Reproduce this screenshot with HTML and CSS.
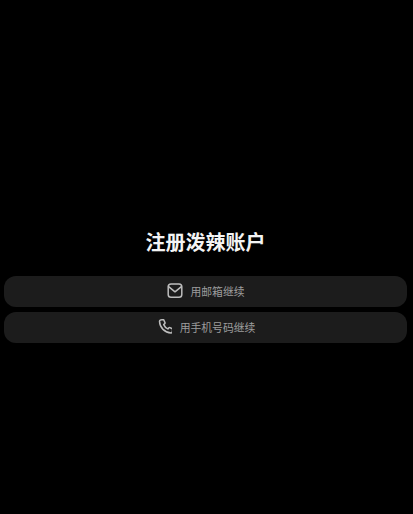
FILE: index.html
```html
<!DOCTYPE html>
<html lang="zh">
<head>
    <meta charset="utf-8">
    <title>注册泼辣账户</title>
    <link rel="stylesheet" href="styles.css">
</head>
<body>
    <div class="signup">
        <h1 class="title">注册泼辣账户</h1>
        <div class="options">
            <div class="option">
                <svg class="icon" viewBox="0 1 16 16" width="16" height="16">
                    <rect x="1.2" y="1.9" width="13.6" height="13.4" rx="2.8"/>
                    <path d="M1.6 4.6 L8 9.8 L14.4 4.6"/>
                </svg>
                <span>用邮箱继续</span>
            </div>
            <div class="option">
                <svg class="icon" viewBox="-2 1 16 16" width="16" height="16">
                    <path d="M2.6 2 L4.9 1.6 C5.4 1.6 5.7 1.8 5.9 2.2 L7 4.6 C7.1 5 7 5.3 6.7 5.6 L5.7 6.6 C6.5 8.5 8 10 9.9 10.9 L10.9 9.8 C11.2 9.5 11.6 9.4 12 9.6 L14.2 10.8 C14.6 11 14.8 11.4 14.7 11.8 L14.3 13.9 C14.2 14.5 13.7 14.9 13.1 14.9 C6.7 14.7 1.7 9.6 1.5 3.3 C1.5 2.6 2 2.1 2.6 2 Z"/>
                </svg>
                <span>用手机号码继续</span>
            </div>
        </div>
    </div>
</body>
</html>
```

FILE: styles.css
```css
* {
    box-sizing: border-box;
}

html, body {
    height: 100%;
}

body {
    margin: 0;
    background: #000;
    font-family: "Liberation Sans", "Noto Sans CJK SC", sans-serif;
}

.signup {
    padding: 230px 6px 0 4px;
}

.title {
    margin: 0 0 18.5px 0;
    font-size: 20px;
    line-height: 27px;
    font-weight: 700;
    color: #f4f4f4;
    text-align: center;
}

.options {
    display: flex;
    flex-direction: column;
    gap: 5.5px;
}

.option {
    display: flex;
    justify-content: center;
    align-items: center;
    gap: 8px;
    height: 31px;
    padding-bottom: 1px;
    background: #1c1c1c;
    border-radius: 12px;
    color: #9c9c9c;
    font-size: 10.8px;
}

.icon {
    flex: none;
    fill: none;
    stroke: #bdbdbd;
    stroke-width: 1.5;
    stroke-linejoin: round;
    stroke-linecap: round;
}
```
